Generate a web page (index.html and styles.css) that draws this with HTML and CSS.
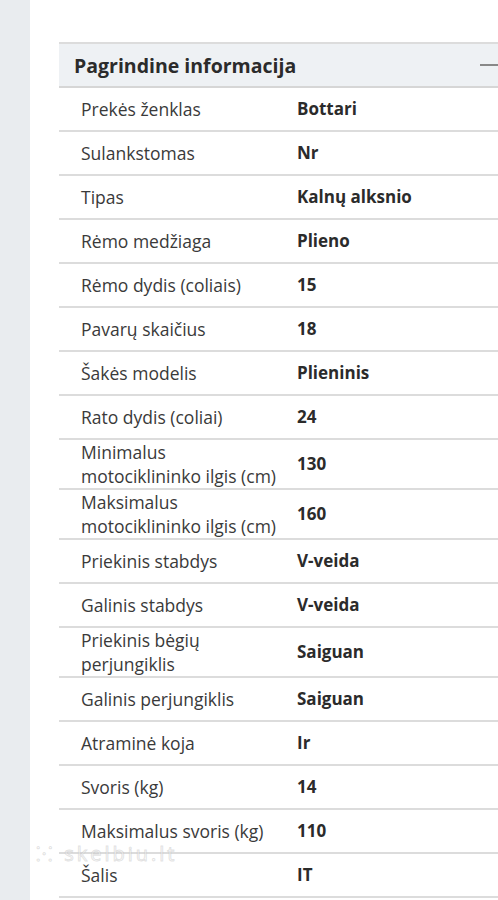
FILE: index.html
```html
<!DOCTYPE html>
<html>
	<head>
		<meta charset="UTF-8">
		<meta name="viewport" content="width=device-width, initial-scale=1.0">
		<title>Pagrindine informacija</title>
		<link rel="stylesheet" href="styles.css">
	</head>
	<body>
		<div class="page">
			<div class="sidebar"></div>
			<div class="content">
				<div class="specs">
					<div class="specs-head">
						<span class="specs-title">Pagrindine informacija</span>
						<span class="toggle"></span>
					</div>
					<div class="row"><span class="label">Prekės ženklas</span><span class="value">Bottari</span></div>
					<div class="row"><span class="label">Sulankstomas</span><span class="value">Nr</span></div>
					<div class="row"><span class="label">Tipas</span><span class="value">Kalnų alksnio</span></div>
					<div class="row"><span class="label">Rėmo medžiaga</span><span class="value">Plieno</span></div>
					<div class="row"><span class="label">Rėmo dydis (coliais)</span><span class="value">15</span></div>
					<div class="row"><span class="label">Pavarų skaičius</span><span class="value">18</span></div>
					<div class="row"><span class="label">Šakės modelis</span><span class="value">Plieninis</span></div>
					<div class="row"><span class="label">Rato dydis (coliai)</span><span class="value">24</span></div>
					<div class="row"><span class="label">Minimalus motociklininko ilgis (cm)</span><span class="value">130</span></div>
					<div class="row"><span class="label">Maksimalus motociklininko ilgis (cm)</span><span class="value">160</span></div>
					<div class="row"><span class="label">Priekinis stabdys</span><span class="value">V-veida</span></div>
					<div class="row"><span class="label">Galinis stabdys</span><span class="value">V-veida</span></div>
					<div class="row"><span class="label">Priekinis bėgių perjungiklis</span><span class="value">Saiguan</span></div>
					<div class="row"><span class="label">Galinis perjungiklis</span><span class="value">Saiguan</span></div>
					<div class="row"><span class="label">Atraminė koja</span><span class="value">Ir</span></div>
					<div class="row"><span class="label">Svoris (kg)</span><span class="value">14</span></div>
					<div class="row"><span class="label">Maksimalus svoris (kg)</span><span class="value">110</span></div>
					<div class="row"><span class="label">Šalis</span><span class="value">IT</span></div>
				</div>
			</div>
		</div>
		<div class="watermark">⁙ skelbiu.lt</div>
	</body>
</html>
```

FILE: styles.css
```css
html, body {
	margin: 0;
	padding: 0;
	overflow: hidden;
}

body {
	font-family: "Open Sans", sans-serif;
	color: #333;
	background-color: #fff;
}

.page {
	display: flex;
	height: 900px;
}

.sidebar {
	flex: 0 0 30px;
	background-color: #e9ecef;
}

.content {
	flex: 0 0 520px;
	padding: 42px 0 0 29px;
}

.specs {
	width: 470px;
	border-top: 2px solid #dcdcdc;
}

.specs-head {
	display: flex;
	align-items: center;
	justify-content: space-between;
	height: 42px;
	padding: 0 0 0 15px;
	background-color: #eef1f4;
	border-bottom: 2px solid #d6d6d6;
}

.specs-title {
	font-size: 19.5px;
	font-weight: 700;
	color: #2b2b2b;
}

.toggle {
	width: 20px;
	height: 2px;
	margin-right: 29px;
	background-color: #888;
}

.row {
	display: grid;
	grid-template-columns: 238px 1fr;
	align-items: center;
	min-height: 42px;
	border-bottom: 2px solid #dcdcdc;
	font-size: 17.5px;
	line-height: 24px;
}

.label {
	padding: 0 14px 0 22px;
	color: #3a3a3a;
}

.value {
	font-weight: 700;
	font-size: 17px;
	color: #2b2b2b;
}

.watermark {
	position: absolute;
	left: 36px;
	top: 844px;
	font-size: 20px;
	line-height: 19px;
	color: rgba(255, 255, 255, 0.6);
	-webkit-text-stroke: 1px rgba(170, 170, 170, 0.35);
	letter-spacing: 3px;
}
```
